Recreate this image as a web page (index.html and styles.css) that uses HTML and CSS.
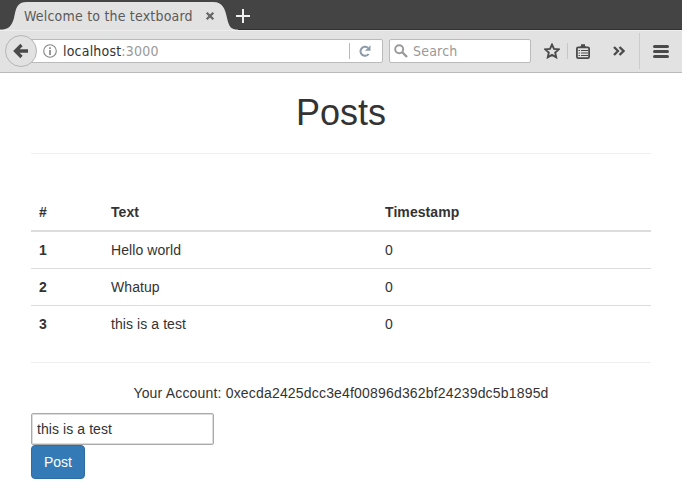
FILE: index.html
```html
<!DOCTYPE html>
<html lang="en">
<head>
<meta charset="utf-8">
<title>Welcome to the textboard</title>
<link rel="stylesheet" href="styles.css">
</head>
<body>
<header class="browser">
  <div class="tabs">
    <svg class="tab-shape" width="240" height="30" viewBox="0 0 240 30"><path d="M0 30V29.500C8 29.500 11.500 27 14 18C16 8 17 2 27 2H213C223 2 225 9 227 18C229 27 231 29.500 238 29.500V30Z" fill="#e2e2e2"/></svg>
    <span class="tab-title">Welcome to the textboard</span>
    <svg class="tab-close" width="10" height="10" viewBox="0 0 10 10"><path d="M1.700 1.700L8.300 8.300M8.300 1.700L1.700 8.300" stroke="#666" stroke-width="2.300"/></svg>
    <svg class="new-tab" width="14" height="14" viewBox="0 0 14 14"><path d="M7 0V14M0 7H14" stroke="#f0f0f0" stroke-width="2"/></svg>
  </div>
  <div class="toolbar">
    <div class="back"><svg width="16" height="16" viewBox="0 0 16 16"><path d="M8.500 2L2.500 8L8.500 14M3 8H15" fill="none" stroke="#4a4a4a" stroke-width="3.300"/></svg></div>
    <div class="url">
      <svg class="info" width="14" height="14" viewBox="0 0 14 14"><circle cx="7" cy="7" r="6.300" fill="none" stroke="#858585" stroke-width="1.100"/><path d="M7 6V11M7 3.200V4.900" stroke="#777" stroke-width="1.500"/></svg>
      <span class="host">localhost<span class="port">:3000</span></span>
      <span class="url-line"></span>
      <svg class="reload" width="12" height="12" viewBox="0 0 12 12"><path d="M8.800 2.800A4.500 4.500 0 1 0 9.600 9" fill="none" stroke="#8c9aa8" stroke-width="2"/><path d="M11.500 .300V5.800H6Z" fill="#8c9aa8"/></svg>
    </div>
    <div class="search">
      <svg width="14" height="14" viewBox="0 0 14 14"><circle cx="5.200" cy="5.200" r="4" fill="none" stroke="#999" stroke-width="1.900"/><path d="M8 8L13 13" stroke="#999" stroke-width="2.400"/></svg>
      <span>Search</span>
    </div>
    <svg class="star" width="16" height="16" viewBox="0 0 16 16"><path d="M8 1.600L10 5.900L14.800 6.400L11.200 9.600L12.200 14.300L8 11.900L3.800 14.300L4.800 9.600L1.200 6.400L6 5.900Z" fill="none" stroke="#4a4a4a" stroke-width="1.900"/></svg>
    <span class="tool-line"></span>
    <svg class="clip" width="14" height="15" viewBox="0 0 14 15"><rect x=".900" y="3.400" width="12.200" height="10.700" rx="1.300" fill="none" stroke="#4a4a4a" stroke-width="1.800"/><path d="M3 3.500L5 2V.200H9V2L11 3.500Z" fill="#4a4a4a"/><path d="M2.500 6.500H4M5 6.500H12M2.500 9H4M5 9H12M2.500 11.500H4M5 11.500H12" stroke="#4a4a4a"/></svg>
    <svg class="more" width="12" height="10" viewBox="0 0 12 10"><path d="M1 1L5 5L1 9M6.500 1L10.500 5L6.500 9" fill="none" stroke="#4a4a4a" stroke-width="2.300"/></svg>
    <span class="menu-line"></span>
    <svg class="menu" width="16" height="13" viewBox="0 0 16 13"><path d="M1.500 1.500H14.500M1.500 6.500H14.500M1.500 11.500H14.500" stroke="#4a4a4a" stroke-width="3" stroke-linecap="round"/></svg>
  </div>
</header>
<main>
  <h1>Posts</h1>
  <hr>
  <table>
    <thead><tr><th class="num">#</th><th class="text">Text</th><th>Timestamp</th></tr></thead>
    <tbody>
      <tr><th>1</th><td>Hello world</td><td>0</td></tr>
      <tr><th>2</th><td>Whatup</td><td>0</td></tr>
      <tr><th>3</th><td>this is a test</td><td>0</td></tr>
    </tbody>
  </table>
  <hr>
  <p>Your Account: 0xecda2425dcc3e4f00896d362bf24239dc5b1895d</p>
  <form>
    <input type="text" value="this is a test" aria-label="Text">
    <button type="button">Post</button>
  </form>
</main>
</body>
</html>
```
FILE: styles.css
```css
* { box-sizing: border-box; }
body { margin: 0; background: #fff; color: #333; font: 14px/20px "Liberation Sans", sans-serif; overflow: hidden; }
svg { display: block; flex: none; }
.browser { font-family: "DejaVu Sans Condensed", "DejaVu Sans", sans-serif; font-stretch: condensed; font-size: 14px; letter-spacing: .2px; }
.tabs { position: relative; display: flex; align-items: center; height: 30px; padding: 1px 0 0 24px; background: linear-gradient(#444 0 29px, #333 29px); }
.tab-shape { position: absolute; left: 0; top: 0; }
.tab-title { position: relative; width: 181px; color: #5a5a5a; white-space: nowrap; }
.tab-close { position: relative; }
.new-tab { margin-left: 21px; }
.toolbar { display: flex; align-items: center; height: 43px; padding: 0 5px; background: linear-gradient(#eee 0 1px, #e2e2e2 1px); border-bottom: 1px solid #bababa; }
.back { position: relative; display: flex; align-items: center; justify-content: center; flex: none; width: 32px; height: 32px; border: 1px solid #b5b5b5; border-radius: 50%; background: #e2e2e2; }
.url, .search { display: flex; align-items: center; height: 24px; background: #fff; border: 1px solid #bababa; border-radius: 2px; }
.url { flex: none; width: 357px; margin-left: -11px; padding-left: 16px; }
.host { margin-left: 6px; color: #333; }
.port { color: #999; }
.url-line { width: 1px; height: 16px; margin-left: auto; background: #bababa; }
.reload { margin: 0 11px 0 9px; }
.search { flex: none; width: 142px; margin-left: 6px; padding-left: 4px; color: #999; }
.search span { margin-left: 5px; }
.star { margin-left: 13px; }
.tool-line { width: 1px; height: 16px; margin-left: 7px; background: #c7c7c7; }
.clip { margin-left: 8px; }
.more { margin-left: 23px; }
.menu-line { width: 1px; height: 36px; margin-left: 14px; background: #ccc; }
.menu { margin-left: 13px; }
main { padding: 20px 31px 0; }
h1 { margin: 0 0 20px; font-size: 36px; font-weight: 400; line-height: 40px; text-align: center; }
hr { height: 1px; margin: 0 0 20px; border: 0; background: #eee; }
table { width: 100%; margin: 40px 0 20px; border-collapse: separate; border-spacing: 0; table-layout: fixed; letter-spacing: .08px; }
th, td { padding: 8px; text-align: left; border-top: 1px solid #ddd; }
.num { width: 72px; }
.text { width: 274px; }
thead th { height: 38px; border-top: 0; border-bottom: 2px solid #ddd; }
tbody tr:first-child > * { border-top: 0; }
p { margin: 0 0 10px; text-align: center; letter-spacing: .18px; }
form { display: flex; flex-direction: column; align-items: flex-start; }
input { width: 183px; height: 32px; padding: 1px 5px; border: 1px solid #aaa; border-radius: 2px; box-shadow: inset 0 0 0 1px #ddd; background: #fff; color: #333; font: inherit; letter-spacing: .08px; }
button { width: 54px; height: 34px; padding: 0; border: 1px solid #2e6da4; border-radius: 4px; background: #337ab7; color: #fff; font: inherit; }
```
